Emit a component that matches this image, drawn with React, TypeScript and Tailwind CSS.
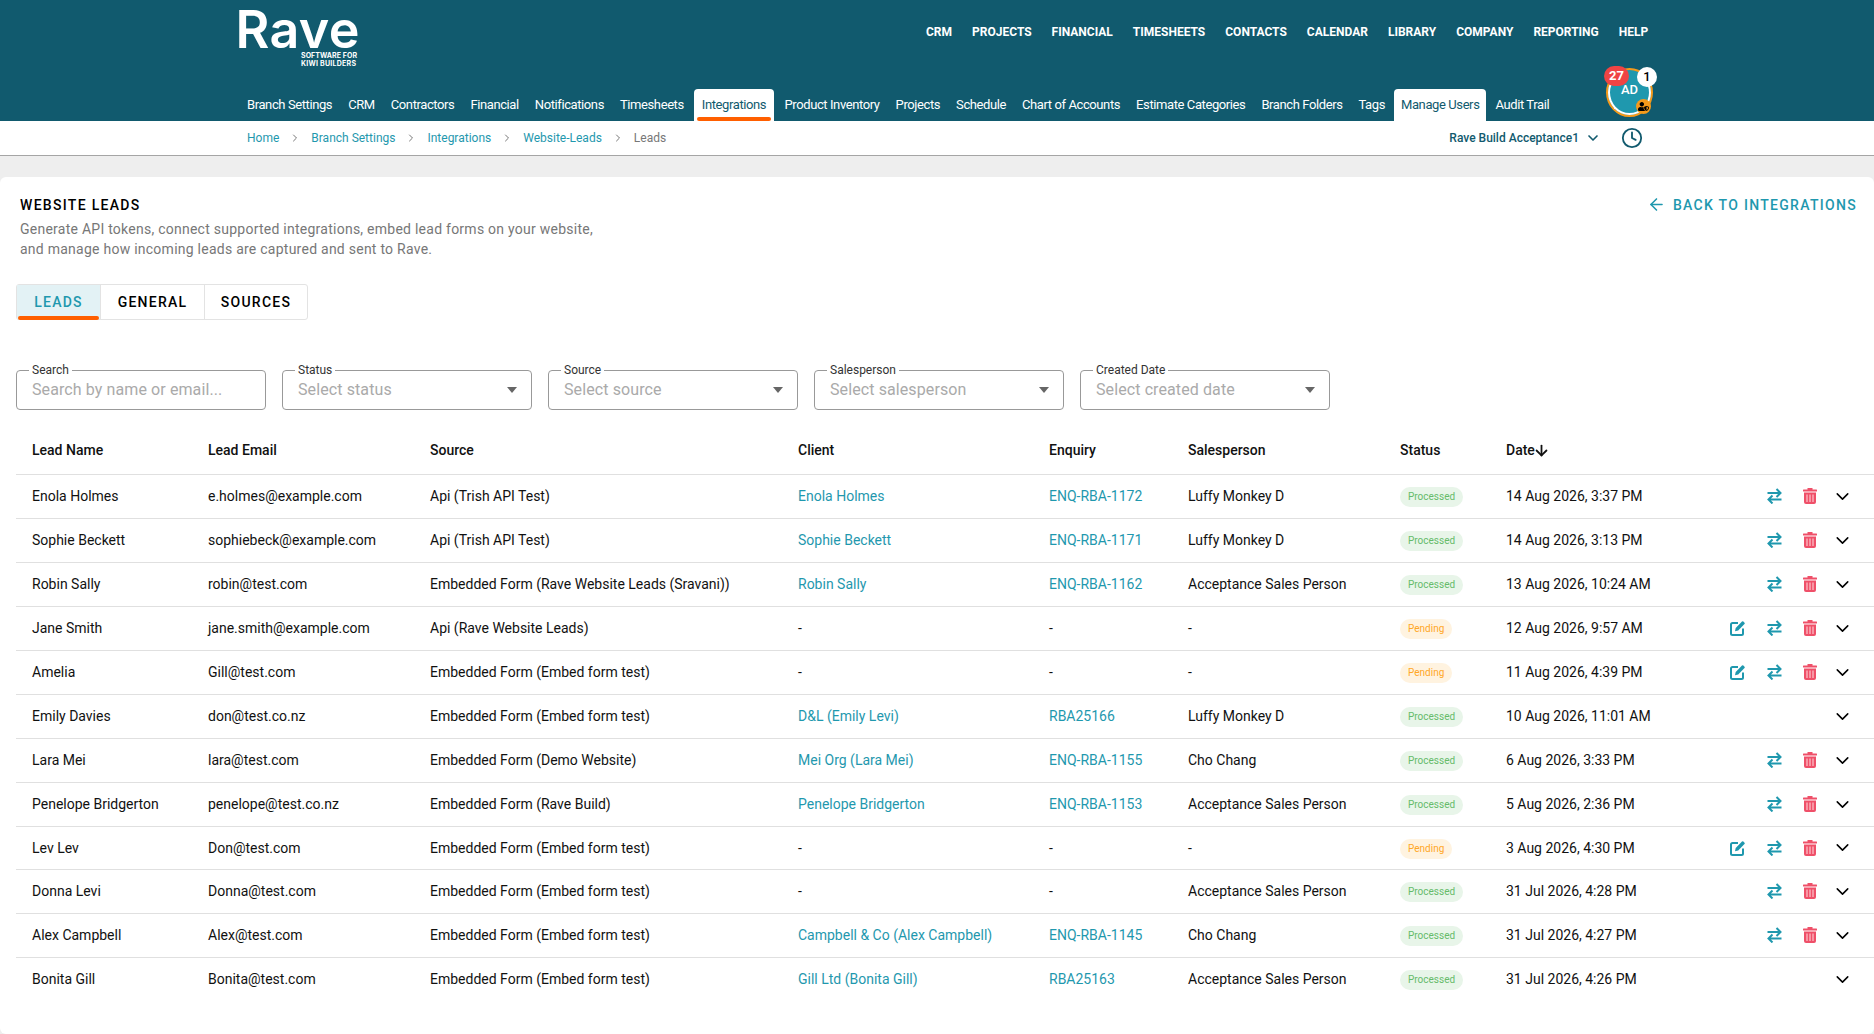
import React from 'react';
import { ArrowLeft, ArrowDown, ChevronDown, Clock, ChevronRight } from 'lucide-react';
import { FaUserShield } from 'react-icons/fa';

const topNav = ['CRM', 'PROJECTS', 'FINANCIAL', 'TIMESHEETS', 'CONTACTS', 'CALENDAR', 'LIBRARY', 'COMPANY', 'REPORTING', 'HELP'];
const subNav = ['Branch Settings', 'CRM', 'Contractors', 'Financial', 'Notifications', 'Timesheets', 'Integrations', 'Product Inventory', 'Projects', 'Schedule', 'Chart of Accounts', 'Estimate Categories', 'Branch Folders', 'Tags', 'Manage Users', 'Audit Trail'];
const crumbs = ['Home', 'Branch Settings', 'Integrations', 'Website-Leads'];
const filters = [
  { label: 'Search', text: 'Search by name or email...', select: false },
  { label: 'Status', text: 'Select status', select: true },
  { label: 'Source', text: 'Select source', select: true },
  { label: 'Salesperson', text: 'Select salesperson', select: true },
  { label: 'Created Date', text: 'Select created date', select: true },
];

type Lead = { name: string; email: string; source: string; client: string; enquiry: string; sales: string; status: 'Processed' | 'Pending'; date: string; edit?: boolean; noActions?: boolean };

const leads: Lead[] = [
  { name: 'Enola Holmes', email: 'e.holmes@example.com', source: 'Api (Trish API Test)', client: 'Enola Holmes', enquiry: 'ENQ-RBA-1172', sales: 'Luffy Monkey D', status: 'Processed', date: '14 Aug 2026, 3:37 PM' },
  { name: 'Sophie Beckett', email: 'sophiebeck@example.com', source: 'Api (Trish API Test)', client: 'Sophie Beckett', enquiry: 'ENQ-RBA-1171', sales: 'Luffy Monkey D', status: 'Processed', date: '14 Aug 2026, 3:13 PM' },
  { name: 'Robin Sally', email: 'robin@test.com', source: 'Embedded Form (Rave Website Leads (Sravani))', client: 'Robin Sally', enquiry: 'ENQ-RBA-1162', sales: 'Acceptance Sales Person', status: 'Processed', date: '13 Aug 2026, 10:24 AM' },
  { name: 'Jane Smith', email: 'jane.smith@example.com', source: 'Api (Rave Website Leads)', client: '-', enquiry: '-', sales: '-', status: 'Pending', date: '12 Aug 2026, 9:57 AM', edit: true },
  { name: 'Amelia', email: 'Gill@test.com', source: 'Embedded Form (Embed form test)', client: '-', enquiry: '-', sales: '-', status: 'Pending', date: '11 Aug 2026, 4:39 PM', edit: true },
  { name: 'Emily Davies', email: 'don@test.co.nz', source: 'Embedded Form (Embed form test)', client: 'D&L (Emily Levi)', enquiry: 'RBA25166', sales: 'Luffy Monkey D', status: 'Processed', date: '10 Aug 2026, 11:01 AM', noActions: true },
  { name: 'Lara Mei', email: 'lara@test.com', source: 'Embedded Form (Demo Website)', client: 'Mei Org (Lara Mei)', enquiry: 'ENQ-RBA-1155', sales: 'Cho Chang', status: 'Processed', date: '6 Aug 2026, 3:33 PM' },
  { name: 'Penelope Bridgerton', email: 'penelope@test.co.nz', source: 'Embedded Form (Rave Build)', client: 'Penelope Bridgerton', enquiry: 'ENQ-RBA-1153', sales: 'Acceptance Sales Person', status: 'Processed', date: '5 Aug 2026, 2:36 PM' },
  { name: 'Lev Lev', email: 'Don@test.com', source: 'Embedded Form (Embed form test)', client: '-', enquiry: '-', sales: '-', status: 'Pending', date: '3 Aug 2026, 4:30 PM', edit: true },
  { name: 'Donna Levi', email: 'Donna@test.com', source: 'Embedded Form (Embed form test)', client: '-', enquiry: '-', sales: 'Acceptance Sales Person', status: 'Processed', date: '31 Jul 2026, 4:28 PM' },
  { name: 'Alex Campbell', email: 'Alex@test.com', source: 'Embedded Form (Embed form test)', client: 'Campbell & Co (Alex Campbell)', enquiry: 'ENQ-RBA-1145', sales: 'Cho Chang', status: 'Processed', date: '31 Jul 2026, 4:27 PM' },
  { name: 'Bonita Gill', email: 'Bonita@test.com', source: 'Embedded Form (Embed form test)', client: 'Gill Ltd (Bonita Gill)', enquiry: 'RBA25163', sales: 'Acceptance Sales Person', status: 'Processed', date: '31 Jul 2026, 4:26 PM', noActions: true },
];

// 行アクションのアイコン
const EditIcon = () => (
  <svg width="16" height="16" viewBox="0 0 16 16" fill="none">
    <path d="M8 3H2.5A1.5 1.5 0 0 0 1 4.5v9A1.5 1.5 0 0 0 2.5 15h9a1.5 1.5 0 0 0 1.5-1.5V8.5" stroke="currentColor" strokeWidth="2" />
    <path d="M5 11.2l.7-3.2L12 1.6a1 1 0 0 1 1.4 0l1.1 1.1a1 1 0 0 1 0 1.4L8.2 10.5z" fill="currentColor" />
  </svg>
);

const SwapIcon = () => (
  <svg width="15" height="16" viewBox="0 0 15 16" fill="none" stroke="currentColor" strokeWidth="2">
    <path d="M0.5 5H13M9.5 1l4 4-4 4" />
    <path d="M14.5 11.5H2M5.5 7.5l-4 4 4 4" />
  </svg>
);

const TrashIcon = () => (
  <svg width="14" height="16" viewBox="0 0 14 16">
    <rect x="4.5" y="0" width="5" height="2" fill="#ef5069" />
    <rect x="0" y="1.5" width="14" height="2" rx="0.5" fill="#ef5069" />
    <path d="M1 4.5h12V14a2 2 0 0 1-2 2H3a2 2 0 0 1-2-2z" fill="#ef5069" />
    <rect x="3.2" y="6.5" width="1.6" height="7.5" fill="#f9a8b4" />
    <rect x="6.2" y="6.5" width="1.6" height="7.5" fill="#f9a8b4" />
    <rect x="9.2" y="6.5" width="1.6" height="7.5" fill="#f9a8b4" />
  </svg>
);

const subNavClass = (item: string) => {
  if (item === 'Integrations') return 'px-[8px] ml-[1px] mr-[3.4px] bg-white text-[#115a6e] rounded-t-[4px]';
  if (item === 'Manage Users') return 'px-[7px] mr-[2px] bg-white text-[#115a6e] rounded-t-[4px]';
  return 'px-[7px] mr-[2px] text-white';
};

const App: React.FC = () => {
  return (
    <div className="w-[1874px] h-[1034px] overflow-hidden bg-[#eeeeee] text-[#111] font-['Roboto',sans-serif]">
      {/* ヘッダー */}
      <header className="h-[121px] bg-[#115a6e] flex flex-col">
        <div className="h-[89px] flex pl-[232px]">
          <svg width="128" height="72" viewBox="0 0 128 72" className="shrink-0">
            <text x="3.5" y="48" fill="#ffffff" fontFamily="Inter, sans-serif" fontSize="52" fontWeight="600" textLength="124" lengthAdjust="spacing">Rave</text>
            <text x="69" y="58" fill="#ffffff" fontFamily="Inter, sans-serif" fontSize="7" fontWeight="700" textLength="56" lengthAdjust="spacing">SOFTWARE FOR</text>
            <text x="69" y="66" fill="#ffffff" fontFamily="Inter, sans-serif" fontSize="7" fontWeight="700" textLength="55" lengthAdjust="spacing">KIWI BUILDERS</text>
          </svg>
          <nav className="ml-[566px] mt-[24px] h-[16px] flex gap-[20px]">
            {topNav.map((item) => (
              <span key={item} className="text-white text-[12px] leading-[16px] font-bold">{item}</span>
            ))}
          </nav>
        </div>
        <div className="flex-1 flex pl-[240px] relative">
          {subNav.map((item) => (
            <div key={item} className={`relative h-[32px] text-[13px] leading-[32px] tracking-[-0.4px] ${subNavClass(item)}`}>
              {item}
              {item === 'Integrations' && <div className="absolute left-[3px] right-[3px] bottom-0 h-[4px] rounded-full bg-[#ff5f00]" />}
            </div>
          ))}
          <div className="absolute left-[1604px] top-[-23px] w-[54px] h-[54px]">
            <div className="absolute left-[2px] top-[2px] w-[47px] h-[49px] rounded-[50%] bg-[#1f98ae] border-[2px] border-[#f59a1b] flex items-center justify-center pb-[5px] text-white text-[13px] font-medium">
              <div className="absolute inset-0 rounded-[50%] border-[2px] border-white border-t-transparent" />
              AD
            </div>
            <div className="absolute left-[33px] top-[1px] w-[20px] h-[20px] rounded-full bg-white text-black text-[13px] leading-[20px] text-center font-medium">1</div>
            <div className="absolute left-0 top-0 w-[25px] h-[20px] rounded-full bg-[#ef4444] text-white text-[13px] font-bold leading-[20px] text-center">27</div>
            <div className="absolute left-[32px] top-[33px] w-[15px] h-[15px] rounded-full bg-[#f59a1b] flex items-center justify-center text-black">
              <FaUserShield size={11} />
            </div>
          </div>
        </div>
      </header>

      {/* パンくず */}
      <div className="h-[35px] bg-white border-b border-[#a5a5a5] flex items-center pl-[247px] text-[12px] text-[#1f98ae]">
        {crumbs.map((c) => (
          <React.Fragment key={c}>
            <span>{c}</span>
            <ChevronRight className="w-[12px] h-[12px] mx-[10px] text-[#777]" />
          </React.Fragment>
        ))}
        <span className="text-[#777]">Leads</span>
        <div className="ml-auto mr-[231px] flex items-center text-[#115a6e]">
          <span className="text-[12px] font-medium">Rave Build Acceptance1</span>
          <ChevronDown className="w-[16px] h-[16px] ml-[6px]" strokeWidth={2.5} />
          <Clock className="w-[22px] h-[22px] ml-[20px]" />
        </div>
      </div>

      <div className="h-[21px]" />

      {/* 本体 */}
      <main className="h-[857px] rounded-[6px] px-[16px] pt-[20px] bg-white">
        <div className="flex justify-between">
          <div className="pl-[4px]">
            <h1 className="text-[14px] leading-[16px] font-medium tracking-[1.3px] text-black">WEBSITE LEADS</h1>
            <p className="mt-[6px] text-[14px] leading-[20px] tracking-[0.25px] text-[#777]">
              Generate API tokens, connect supported integrations, embed lead forms on your website,<br />
              and manage how incoming leads are captured and sent to Rave.
            </p>
          </div>
          <div className="flex items-start pr-[1px] text-[#1f98ae] text-[14px] leading-[16px] font-medium tracking-[1.3px]">
            <ArrowLeft className="w-[19px] h-[19px] mr-[7px] -mt-[2px]" />
            BACK TO INTEGRATIONS
          </div>
        </div>

        <div className="mt-[25px] flex w-fit border border-[#e3e3e3] rounded-[3px] text-[14px] font-medium tracking-[1.25px] leading-[34px]">
          <div className="relative w-[83px] text-center bg-[#e3f2f5] text-[#1f98ae]">
            LEADS
            <div className="absolute left-[1px] right-[1px] bottom-[-1px] h-[4px] rounded-full bg-[#ff5f00]" />
          </div>
          <div className="w-[104px] text-center border-l border-[#e3e3e3] text-black">GENERAL</div>
          <div className="w-[103px] text-center border-l border-[#e3e3e3] text-black">SOURCES</div>
        </div>

        <div className="mt-[50px] flex gap-[16px]">
          {filters.map((f) => (
            <div key={f.label} className="relative w-[250px] h-[40px] border border-[#999] rounded-[4px] flex items-center px-[15px] text-[16px] tracking-[0.1px] text-[#aaa]">
              <span className="absolute left-[12px] top-[-8px] px-[3px] bg-white text-[12px] leading-[15px] tracking-normal text-[#333]">{f.label}</span>
              {f.text}
              {f.select && <span className="ml-auto mr-[-1px] w-0 h-0 border-x-[5.5px] border-x-transparent border-t-[6px] border-t-[#666]" />}
            </div>
          ))}
        </div>

        <table className="mt-[17px] w-[1858px] table-fixed text-[14px] leading-[20px]">
          <colgroup>
            <col className="w-[176px]" />
            <col className="w-[222px]" />
            <col className="w-[368px]" />
            <col className="w-[251px]" />
            <col className="w-[139px]" />
            <col className="w-[212px]" />
            <col className="w-[106px]" />
            <col className="w-[229px]" />
            <col />
          </colgroup>
          <thead>
            <tr className="h-[47px] border-b border-[#e0e0e0] text-left">
              {['Lead Name', 'Lead Email', 'Source', 'Client', 'Enquiry', 'Salesperson', 'Status'].map((h) => (
                <th key={h} className="pl-[16px] font-medium">{h}</th>
              ))}
              <th className="pl-[16px] font-medium">
                <span className="flex items-center">Date<ArrowDown className="w-[17px] h-[17px] -ml-[2px]" strokeWidth={2.5} /></span>
              </th>
              <th />
            </tr>
          </thead>
          <tbody>
            {leads.map((l, i) => (
              <tr key={i} className={`${i === 8 ? 'h-[43px]' : 'h-[44px]'} ${i < leads.length - 1 ? 'border-b border-[#e0e0e0]' : ''}`}>
                <td className="pl-[16px]">{l.name}</td>
                <td className="pl-[16px]">{l.email}</td>
                <td className="pl-[16px]">{l.source}</td>
                <td className={`pl-[16px] ${l.client === '-' ? '' : 'text-[#1f98ae]'}`}>{l.client}</td>
                <td className={`pl-[16px] ${l.enquiry === '-' ? '' : 'text-[#1f98ae]'}`}>{l.enquiry}</td>
                <td className="pl-[16px]">{l.sales}</td>
                <td className="pl-[16px]">
                  {l.status === 'Processed' ? (
                    <span className="inline-block px-[8px] rounded-full bg-[#e8f5e9] text-[#66bb6a] text-[10px] leading-[20px]">Processed</span>
                  ) : (
                    <span className="inline-block px-[8px] rounded-full bg-[#fff3e0] text-[#ffa726] text-[10px] leading-[20px]">Pending</span>
                  )}
                </td>
                <td className="pl-[16px]">{l.date}</td>
                <td>
                  <div className="flex items-center justify-end pr-[18px]">
                    {l.edit && <span className="w-[36px] flex justify-center text-[#1f98ae]"><EditIcon /></span>}
                    {!l.noActions && <span className="w-[36px] flex justify-center text-[#1f98ae]"><SwapIcon /></span>}
                    {!l.noActions && <span className="w-[36px] flex justify-center"><TrashIcon /></span>}
                    <span className="w-[28px] flex justify-center text-black"><ChevronDown size={21} strokeWidth={1.75} /></span>
                  </div>
                </td>
              </tr>
            ))}
          </tbody>
        </table>
      </main>
    </div>
  );
};

export default App;
